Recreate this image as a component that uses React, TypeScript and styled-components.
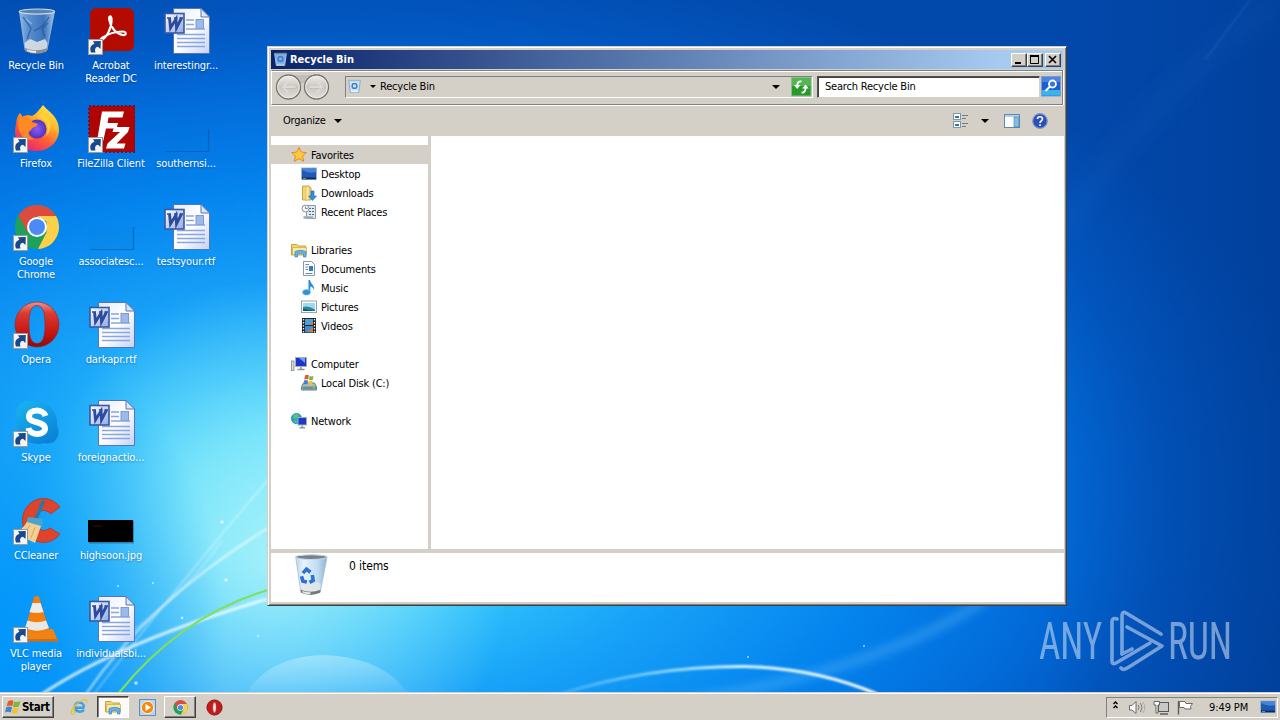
import React from "react";
import styled, { createGlobalStyle, css } from "styled-components";

const FACE = "#d4d0c8";

const Global = createGlobalStyle`
  body { margin: 0; overflow: hidden; }
  * { box-sizing: border-box; }
  #root {
    font-family: "DejaVu Sans Condensed", "DejaVu Sans", sans-serif;
    font-stretch: condensed;
    font-size: 11px;
    line-height: 13px;
    letter-spacing: -0.2px;
    color: #000;
  }
  svg { display: block; flex: none; }
`;

const Screen = styled.div`
  width: 1280px;
  height: 720px;
  display: flex;
  flex-direction: column;
  overflow: hidden;
`;

const Desktop = styled.main`
  position: relative;
  flex: 1;
  overflow: hidden;
  background:
    radial-gradient(ellipse 300px 420px at 0px 640px, rgba(0, 150, 252, 0.9), rgba(0, 145, 248, 0.5) 35%, rgba(0, 130, 240, 0) 75%),
    radial-gradient(ellipse 240px 280px at 270px 560px, rgba(190, 248, 250, 0.75), rgba(150, 240, 255, 0) 100%),
    radial-gradient(ellipse 1000px 560px at 330px 500px, #66e2fb 0%, #48d6fb 14%, #2cbefb 24%, #18a2f8 37%, #0484ee 56%, #026edc 71%, #0258c2 84%, #0249ac 100%);
`;

const Wallpaper = styled.svg`
  position: absolute;
  inset: 0;
`;

const IconGrid = styled.div`
  position: relative;
  display: grid;
  width: max-content;
  margin-left: -1px;
  padding-top: 7px;
  grid-auto-flow: column;
  grid-template-rows: repeat(7, 98px);
  grid-template-columns: repeat(3, 74px);
  column-gap: 1px;
`;

const Shortcut = styled.div<{ $col: number; $row: number }>`
  grid-column: ${(p) => p.$col};
  grid-row: ${(p) => p.$row};
  display: flex;
  flex-direction: column;
  align-items: center;
  gap: 4px;
`;

const ShortcutLabel = styled.span`
  color: #fff;
  text-align: center;
  white-space: pre;
  letter-spacing: -0.12px;
  text-shadow: 0 1px 2px rgba(0, 30, 90, 0.4);
`;

const Window = styled.section`
  position: absolute;
  left: 267px;
  top: 46px;
  width: 800px;
  height: 560px;
  display: flex;
  flex-direction: column;
  padding: 2px;
  background: ${FACE};
  border: 1px solid;
  border-color: ${FACE} #404040 #404040 ${FACE};
  box-shadow: inset 1px 1px #fff, inset -1px -1px #808080;
`;

const TitleBar = styled.header`
  display: flex;
  align-items: center;
  height: 19px;
  margin: 1px 1px 1px;
  padding: 0 2px 0 3px;
  gap: 3px;
  background: linear-gradient(90deg, #0a246a, #a6caf0 92%);
  color: #fff;
  font-weight: bold;
`;

const Title = styled.span`
  flex: 1;
  letter-spacing: 0;
  margin-top: -1px;
`;

const raised = css`
  border: 1px solid;
  border-color: #fff #404040 #404040 #fff;
  box-shadow: inset -1px -1px #808080;
  background: ${FACE};
`;

const CaptionGroup = styled.div`
  display: flex;
`;

const CaptionButton = styled.button<{ $gap?: boolean }>`
  ${raised}
  width: 16px;
  height: 14px;
  padding: 0;
  margin-left: ${(p) => (p.$gap ? 2 : 0)}px;
  display: flex;
  align-items: center;
  justify-content: center;
`;

const NavBar = styled.div`
  display: flex;
  align-items: center;
  height: 35px;
  margin: 0 1px;
  padding: 0 0 2px 3px;
  border: 1px solid;
  border-color: #808080 #808080 #808080 #fff;
  box-shadow: inset 0 1px #fff, 0 1px #fff, 1px 0 #fff;
`;

const AddressBar = styled.div`
  display: flex;
  align-items: center;
  flex: none;
  width: 468px;
  height: 22px;
  margin-left: 14px;
  border: 1px solid;
  border-color: #808080 #fff #fff #808080;
  padding: 0 0 0 2px;
`;

const AddressText = styled.span`
  flex: 1;
  margin-left: 4px;
`;

const SearchBox = styled.div`
  display: flex;
  align-items: center;
  flex: none;
  width: 223px;
  height: 22px;
  margin: 0 1px 0 4px;
  padding-left: 7px;
  background: #fff;
  border: 1px solid;
  border-color: #505050 ${FACE} ${FACE} #505050;
  box-shadow: inset 1px 1px #404040;
`;

const CommandBar = styled.div`
  display: flex;
  align-items: center;
  height: 31px;
  padding: 0 16px 0 13px;
`;

const Spacer = styled.div<{ $w?: number }>`
  flex: ${(p) => (p.$w ? `0 0 ${p.$w}px` : 1)};
`;

const Body = styled.div`
  display: flex;
  height: 413px;
`;

const NavPane = styled.nav`
  width: 158px;
  padding-top: 9px;
  background: #fff;
  display: flex;
  flex-direction: column;
  gap: 19px;
  border-left: 1px solid ${FACE};
`;

const NavItem = styled.div<{ $depth: number; $active?: boolean }>`
  display: flex;
  align-items: center;
  height: 19px;
  gap: 4px;
  padding-left: ${(p) => (p.$depth ? 30 : 20)}px;
  background: ${(p) => (p.$active ? FACE : "transparent")};
`;

const NavLabel = styled.span`
  padding-top: 1px;
`;

const Files = styled.div`
  flex: 1;
  margin-left: 3px;
  background: #fff;
`;

const Details = styled.footer`
  display: flex;
  height: 49px;
  margin: 4px 0 0 1px;
  background: #fff;
  padding-left: 18px;
  gap: 17px;
`;

const DetailsText = styled.span`
  margin-top: 7px;
  font-size: 12px;
  letter-spacing: -0.1px;
`;

const Taskbar = styled.footer`
  display: flex;
  align-items: center;
  height: 28px;
  padding: 3px 2px 1px;
  background: ${FACE};
  box-shadow: inset 0 1px ${FACE}, inset 0 2px #fff;
`;

const StartButton = styled.button`
  ${raised}
  display: flex;
  align-items: center;
  width: 52px;
  height: 22px;
  gap: 0;
  padding: 0 0 0 1px;
  font: bold 11.5px "DejaVu Sans Condensed", "DejaVu Sans", sans-serif;
  letter-spacing: -0.35px;
`;

const TaskButton = styled.div<{ $w: number; $state?: "pressed" | "raised" }>`
  display: flex;
  align-items: center;
  justify-content: center;
  width: ${(p) => p.$w}px;
  height: 22px;
  ${(p) => p.$state === "raised" && raised}
  ${(p) =>
    p.$state === "pressed" &&
    css`
      border: 1px solid;
      border-color: #404040 #fff #fff #404040;
      box-shadow: inset 1px 1px #808080;
      background: #fbfaf8;
    `}
`;

const Tray = styled.div`
  display: flex;
  align-items: center;
  width: 172px;
  height: 21px;
  padding: 0 1px 0 5px;
  border: 1px solid;
  border-color: #808080 #fff #fff #808080;
`;

const Clock = styled.span`
  width: 58px;
  padding-left: 13px;
  letter-spacing: -0.1px;
  white-space: nowrap;
`;

/* ---------- artwork ---------- */

const Arrow = () => (
  <g transform="translate(1 32)">
    <rect x=".5" y=".5" width="14" height="15" fill="#f4f4f2" stroke="#a09a92" />
    <path d="M3 13.5C1.200 9 3 5.500 6.500 5L5 2.200 12.800 2 12.500 10 10 7.800C7.500 8 6.500 10.200 7.500 13.500Z" fill="#17498c" />
  </g>
);

const Bin = ({ size = 48, symbol = false }: { size?: number; symbol?: boolean }) => (
  <svg width={size} height={size} viewBox="0 0 48 48">
    <defs>
      <linearGradient id={symbol ? "binA" : "binB"} x1="0" x2="1">
        <stop offset="0" stopColor={symbol ? "#b9d4ea" : "#8fb6e0"} />
        <stop offset=".25" stopColor={symbol ? "#e8f4fd" : "#5a90d0"} />
        <stop offset=".7" stopColor={symbol ? "#bfdcf2" : "#3c74bc"} />
        <stop offset="1" stopColor={symbol ? "#8fb2cc" : "#a4c4e6"} />
      </linearGradient>
    </defs>
    <path d="M7.500 4.500L13 43Q24 48 35 43L42.500 4.500Z" fill={`url(#${symbol ? "binA" : "binB"})`} stroke="#9dbbd8" strokeWidth=".8" />
    <path d="M12.500 36L18 32 25 35 33 32 35.500 36L34.500 42Q24 47 13.400 42Z" fill="#e4e6e8" opacity=".85" />
    <path d="M13 41Q24 45.500 35.300 41L34.800 44.500Q24 49 13.400 44.500Z" fill={symbol ? "#77777a" : "#8c8f94"} />
    <path d="M15 44Q20 46.500 24 46V43.800Q19 44 15 42.500Z" fill="#e9e9ea" />
    <ellipse cx="24.900" cy="4.600" rx="17.700" ry="2.600" fill={symbol ? "#76838f" : "#5b84b0"} stroke="#ccd9e4" strokeWidth="1.200" />
    {symbol ? (
      <g fill="none" stroke="#2e71cf" strokeWidth="4">
        <path d="M15.500 22.500L19.500 18 24 21.500" />
        <path d="M14 26L15.500 31.500 20 32.500" />
        <path d="M26 24.500L27 30.500 23 33" />
      </g>
    ) : (
      <g fill="none" stroke="#1f5199" strokeWidth="1.500" opacity=".6">
        <path d="M11 10L19 21 15 32M37 10Q32 20 22 24M36 16L30 22 33 30" />
        <path d="M14 12L20 17" stroke="#a8c8ec" />
      </g>
    )}
  </svg>
);

const TinyBin = ({ dark = false }: { dark?: boolean }) => (
  <svg width="13" height="15">
    <path d="M.7 1.500L2.300 13.500H10.700L12.300 1.500Z" fill={dark ? "#7fb0e4" : "#cfe4f8"} stroke={dark ? "#a5bfdc" : "#88acd0"} />
    <path d="M.5 1.500H12.500" stroke={dark ? "#6a86a6" : "#9eb8d0"} strokeWidth="1.400" />
    <rect x="4.200" y="4.700" width="4.600" height="4.600" rx="1.500" fill="none" stroke="#3a78cc" strokeWidth="1.500" />
    <path d="M3 12.500H10" stroke={dark ? "#b8c4d2" : "#f6f6f8"} strokeWidth="1.500" />
  </svg>
);

const Acrobat = () => (
  <svg width="48" height="48">
    <rect x="3" y="1" width="44" height="43" rx="6" fill="#b30b00" />
    <path d="M15 33C20 30 25 20 24.500 12C24.300 8 21.500 9 22.300 13C23.500 20 29 27 36 28C40 28.500 39.500 24.500 35.500 24.500C28 24.500 20 27.500 15 31C12 33.500 13.500 34.500 15 33Z" fill="none" stroke="#fff" strokeWidth="2.200" />
    <Arrow />
  </svg>
);

const Word = () => (
  <svg width="48" height="48" overflow="visible">
    <defs>
      <linearGradient id="page" x1="0" y1="0" x2="1" y2="1">
        <stop offset="0" stopColor="#e4ecfc" />
        <stop offset=".5" stopColor="#fff" />
        <stop offset="1" stopColor="#c4d2f6" />
      </linearGradient>
      <linearGradient id="wbox" x1="0" y1="0" x2="1" y2="1">
        <stop offset="0" stopColor="#fff" />
        <stop offset="1" stopColor="#8fa9e4" />
      </linearGradient>
    </defs>
    <path d="M11.500 1.500H39L47.500 10V46.500H11.500Z" fill="url(#page)" stroke="#5874b4" />
    <path d="M39 1.500V10H47.500Z" fill="#dbe6fb" stroke="#5874b4" />
    <rect x="34" y="12.500" width="7.500" height="9" fill="#9db8ea" stroke="#7d9ad4" />
    <path d="M24 13H32M24 17.500H32M24 22H43M15 27.500H43M15 31.500H43M15 35.500H43M15 39.500H43" stroke="#8ba6dc" strokeWidth="1.300" />
    <rect x="3" y="6.500" width="19" height="19.500" fill="url(#wbox)" stroke="#3a58a4" strokeWidth="1.600" />
    <path d="M5 11H9M12 11H15.500M17.500 11H21" stroke="#2b4b9e" strokeWidth="1.500" />
    <path d="M7.500 11L8.500 21 14 12 14.500 21 19.500 11" fill="none" stroke="#2b4b9e" strokeWidth="2.800" />
  </svg>
);

const Firefox = () => (
  <svg width="48" height="48">
    <defs>
      <linearGradient id="fox" x1=".85" y1="0" x2=".25" y2="1">
        <stop offset="0" stopColor="#fff14a" />
        <stop offset=".35" stopColor="#ffb52b" />
        <stop offset=".65" stopColor="#ff5a35" />
        <stop offset="1" stopColor="#e6207d" />
      </linearGradient>
      <radialGradient id="globe">
        <stop offset="0" stopColor="#8d5bf5" />
        <stop offset="1" stopColor="#4d35c0" />
      </radialGradient>
    </defs>
    <path d="M31 0C35 5 42 9 45 16C51 29 43 45 25 46C9 46 0 34 4 19C4 14 6 10 8 8L11 12C15 9 18 11 20 11C24 9 27 5 31 0Z" fill="url(#fox)" />
    <circle cx="25" cy="24" r="9.500" fill="url(#globe)" />
    <path d="M6 14C12 9 17 11 20 17L26 19C25 22 20 22 19 25C15 27 16 32 22 34C12 37 5 28 6 14Z" fill="#ff8a24" />
    <path d="M24 12C34 13 38 22 34 31C41 25 40 13 31 7Z" fill="#ffd03a" />
    <Arrow />
  </svg>
);

const FileZilla = () => (
  <svg width="48" height="48">
    <rect x="2" y="1" width="46" height="46" fill="#b00505" />
    <rect x="2" y="1" width="46" height="46" fill="none" stroke="#6f1030" strokeWidth="2" strokeDasharray="2 2" />
    <path d="M15 6.500H37L35.500 12.500H21.500L20.500 18H31L29.500 23.500H19L15.500 39H9.500Z" fill="#fff" />
    <path d="M27 22H42.500L41 27 29.500 38.500H38.500L37 43.500H19L20.500 38.500 33 27H25.500Z" fill="#fff" />
    <Arrow />
  </svg>
);

const ChromeDisc = () => (
  <g>
    <circle cx="24" cy="24" r="22" fill="#1ea15a" />
    <path d="M24 13H43.050A22 22 0 0 0 5.500 12L14.500 29.500Z" fill="#dd4b3e" />
    <path d="M33.500 18.500V29.500L25 46A22 22 0 0 0 43.050 13H24Z" fill="#fdd04a" />
    <circle cx="24" cy="24" r="10" fill="#fff" />
    <circle cx="24" cy="24" r="8" fill="#4c8bf5" />
  </g>
);

const Chrome = () => (
  <svg width="48" height="48">
    <g transform="translate(1 0)"><ChromeDisc /></g>
    <Arrow />
  </svg>
);

const OperaRing = () => (
  <>
    <defs>
      <linearGradient id="op" x1="0" y1="0" x2="0" y2="1">
        <stop offset="0" stopColor="#f0938a" />
        <stop offset=".25" stopColor="#dc3a30" />
        <stop offset=".7" stopColor="#c41410" />
        <stop offset="1" stopColor="#8c0c0c" />
      </linearGradient>
    </defs>
    <path fillRule="evenodd" d="M25 1A22 22.500 0 1 0 25 46A22 22.500 0 1 0 25 1ZM25 4.500C31.500 4.500 33 13 33 23.500S31.500 42.500 25 42.500S17 34 17 23.500S18.500 4.500 25 4.500Z" fill="url(#op)" stroke="#9a2020" strokeWidth=".6" />
  </>
);

const Opera = () => (
  <svg width="48" height="48">
    <OperaRing />
    <Arrow />
  </svg>
);

const Skype = () => (
  <svg width="48" height="48">
    <defs>
      <linearGradient id="sky" x1="0" y1="0" x2=".6" y2="1">
        <stop offset="0" stopColor="#19b5f1" />
        <stop offset="1" stopColor="#0b84d8" />
      </linearGradient>
    </defs>
    <path d="M15 2C21 1 24 3 27 3A21 21 0 0 1 45 26C50 38 42 47 32 44A21 21 0 0 1 5 20C2 11 7 3 15 2Z" fill="url(#sky)" />
    <path d="M33.500 17C31 9.500 17 10 17 17.500C17 25 33 21.500 33 29.500C33 36.500 18 37 16.500 29" fill="none" stroke="#fff" strokeWidth="6" />
    <Arrow />
  </svg>
);

const CCleaner = () => (
  <svg width="48" height="48">
    <path d="M48 10A21 22 0 1 0 48 37L38 31A9.500 10 0 1 1 39 17Z" fill="#df432b" stroke="#a83822" strokeWidth=".8" />
    <path d="M31 5L24 22" stroke="#2b78ac" strokeWidth="3.600" strokeLinecap="round" />
    <path d="M16 20L31 22 30 30 14 27Z" fill="#4ba3cf" />
    <path d="M15 25L29 29Q26 38 23 46L3 36Q10 33 15 25Z" fill="#f3cf94" />
    <path d="M18 28L12 37M23 30L19 41" stroke="#d6a65e" />
    <Arrow />
  </svg>
);

const Vlc = () => (
  <svg width="48" height="48">
    <path d="M10 34H41L46 46H7Z" fill="#ee8414" />
    <path d="M7 44H46V46.500H7Z" fill="#d96c0a" />
    <path d="M22 2Q24.500 0 27 2L37 35Q25 41 13 35Z" fill="#f47d0c" />
    <path d="M20.500 8L28.500 8 31.500 17Q24.500 19 17.500 17Z" fill="#ececec" />
    <path d="M15.500 25.500Q25 29 34 25.500L37 33Q25 38.500 13 33Z" fill="#e8e8e8" />
    <Arrow />
  </svg>
);

const FaintThumb = () => (
  <svg width="48" height="48">
    <path d="M46.500 24V46.500H3" fill="none" stroke="#0a4f9c" strokeOpacity=".55" strokeWidth="1.200" />
    <rect x="2" y="24" width="44" height="22" fill="#0b78d8" fillOpacity=".12" />
  </svg>
);

const BlackThumb = () => (
  <svg width="48" height="48">
    <rect x="2" y="24" width="45" height="22.500" fill="#03314c" opacity=".4" />
    <rect x="1" y="23" width="45" height="22" fill="#000" />
    <path d="M6 29H15" stroke="#3a0e10" />
  </svg>
);

const Flag = ({ size = 18 }: { size?: number }) => (
  <svg width={size} height={size} viewBox="0 0 18 18">
    <path d="M4 3.500Q7 1.500 9.500 3L8.300 8.200Q5.500 6.800 2.600 8.300Z" fill="#e8582a" />
    <path d="M10.300 3.500Q13.500 4.800 16.500 3L15 8.300Q12 10 9 8.600Z" fill="#7ab83c" />
    <path d="M2.300 9.300Q5.500 7.800 8 9.200L6.800 14.500Q4 13 1 14.500Z" fill="#3c86d0" />
    <path d="M8.800 9.600Q12 11 14.800 9.400L13.300 14.700Q10.500 16.300 7.500 14.800Z" fill="#f5c130" />
  </svg>
);

const Tri = ({ w = 7 }: { w?: number }) => (
  <svg width={w} height={w / 2} viewBox="0 0 8 4" preserveAspectRatio="none">
    <path d="M0 0H8L4 4Z" fill="#000" />
  </svg>
);

const RoundNav = () => (
  <svg width="56" height="28">
    <defs>
      <linearGradient id="rn" x1="0" y1="0" x2="0" y2="1">
        <stop offset="0" stopColor="#f0eeea" />
        <stop offset=".5" stopColor="#c9c6c0" />
        <stop offset="1" stopColor="#e2dfda" />
      </linearGradient>
    </defs>
    <path d="M12 2H42V8Q28 12 12 8Z" fill="#c2bfb8" />
    {[13.500, 41.500].map((cx) => (
      <g key={cx}>
        <circle cx={cx} cy="14" r="12" fill="url(#rn)" stroke="#77746f" strokeWidth="1.300" />
        <circle cx={cx} cy="14" r="10.800" fill="none" stroke="#f3f1ee" strokeWidth=".8" />
      </g>
    ))}
    <path d="M20.500 14H8.500M13 9L8 14 13 19M34.500 14H46.500M42 9L47 14 42 19" fill="none" stroke="#dddad5" strokeWidth="2" />
    <path d="M20.500 15.500H10M34.500 15.500H46" stroke="#b8b5b0" strokeWidth=".5" />
  </svg>
);

const Refresh = () => (
  <svg width="21" height="20">
    <rect x=".5" y=".5" width="19.500" height="18.500" fill="#28992c" stroke="#8fbc8c" />
    <rect x="1" y="1" width="18.500" height="8" fill="#72c86e" opacity=".6" />
    <path d="M10.500 4.500C7.500 4 6.200 6 6.200 9" fill="none" stroke="#fff" strokeWidth="1.800" />
    <path d="M3 8H9.500L6.200 12Z" fill="#fff" />
    <path d="M10.500 15.500C13.500 16 14.500 13.500 14.500 11" fill="none" stroke="#fff" strokeWidth="1.800" />
    <path d="M11.200 11.500H17.800L14.500 7.500Z" fill="#fff" />
  </svg>
);

const SearchGo = () => (
  <svg width="20" height="21">
    <rect x=".5" y=".5" width="19" height="19.500" fill="#1c5fd2" stroke="#7a9cd0" />
    <rect x="1" y="14" width="18" height="5.500" fill="#37b4ee" />
    <rect x="1" y="1" width="18" height="5" fill="#6b9ee8" opacity=".6" />
    <circle cx="11.500" cy="8" r="3.500" fill="#3b74dc" stroke="#fff" strokeWidth="1.800" />
    <path d="M9 10.500L4.500 15" stroke="#fff" strokeWidth="2.200" />
  </svg>
);

const ViewIcon = () => (
  <svg width="16" height="16">
    <rect x=".5" y=".5" width="7" height="6" fill="#fff" stroke="#8095a8" />
    <rect x=".5" y="8.500" width="7" height="6" fill="#fff" stroke="#8095a8" />
    <path d="M2 4H6M2 12H6" stroke="#2878a8" strokeWidth="2.200" />
    <path d="M9 2.500H15M9 5.500H13M9 10.500H15M9 13.500H13" stroke="#6a7c90" />
  </svg>
);

const PaneIcon = () => (
  <svg width="16" height="14">
    <rect x=".5" y=".5" width="15" height="13" fill="#fff" stroke="#5c8ab4" />
    <rect x="1" y="1" width="14" height="2" fill="#b4d0e8" />
    <rect x="10" y="3" width="5" height="10" fill="#7fc0e0" stroke="#4b7ba8" strokeWidth=".6" />
  </svg>
);

const HelpIcon = () => (
  <svg width="16" height="16">
    <circle cx="8" cy="8" r="7.300" fill="#2a50b8" stroke="#8096c8" strokeWidth="1.200" />
    <path d="M5.500 6C5.500 3 10.500 3 10.500 6C10.500 8 8 7.800 8 10M8 11.300V13" fill="none" stroke="#fff" strokeWidth="1.600" />
  </svg>
);

const Monitor = () => (
  <svg width="16" height="16">
    <rect x=".5" y="2" width="15" height="11" fill="#2458b0" stroke="#9db4cc" />
    <path d="M1 11V4Q8 8 15 6V3H1Z" fill="#3f86dc" />
    <path d="M1 12.500H15" stroke="#0c2c66" strokeWidth="2" />
    <path d="M2 12.500H5" stroke="#4ca868" />
  </svg>
);

const glyphs: Record<string, React.ReactNode> = {
  star: <path d="M8 .5L10.200 5 15.400 5.600 11.500 9.100 12.700 14.300 8 11.700 3.300 14.300 4.500 9.100 .6 5.600 5.800 5Z" fill="#ffc83d" stroke="#e98a1e" />,
  downloads: (
    <>
      <path d="M1.500 1H8L10 3V15H1.500Z" fill="#f4d774" stroke="#c9a544" />
      <path d="M5 2.500L8 1V14L5 15.500Z" fill="#fff0b0" stroke="#d0ac50" strokeWidth=".6" />
      <path d="M10 6H13V11H15.500L11.500 15.500 7.500 11H10Z" fill="#2f8fe0" stroke="#1d68b0" strokeWidth=".6" />
    </>
  ),
  recent: (
    <>
      <path d="M5.500 1.500H14.500V14.500H5.500Z" fill="#e2e8ec" stroke="#8d9ba4" />
      <path d="M8 4.500H10M11 4.500H13M8 7.500H10M11 7.500H13M8 10.500H10M11 10.500H13" stroke="#51687c" />
      <circle cx="4.500" cy="4.500" r="3.500" fill="#f2f6f8" stroke="#8795a0" />
      <path d="M4.500 2.500V4.500H6.500" fill="none" stroke="#54646f" strokeWidth=".8" />
      <path d="M2.500 13.500H12" stroke="#9fabb4" strokeWidth="2.500" />
    </>
  ),
  libraries: (
    <>
      <path d="M.5 2.500H6L7.500 4H14.500V13H.5Z" fill="#f3d670" stroke="#c9a23c" />
      <path d="M1.500 5.500H15.500V12.500H1.500Z" fill="#fbe9a0" stroke="#d1b04e" strokeWidth=".8" />
      <path d="M4 15V9.500Q9.500 7 15 9.500V15H12.500V12Q9.500 10.500 6.500 12V15Z" fill="#64b3ea" stroke="#3b86c4" strokeWidth=".7" />
    </>
  ),
  documents: (
    <>
      <path d="M2.500 .5H10.500L13.500 3.500V14.500H2.500Z" fill="#fff" stroke="#8698b4" />
      <path d="M4.500 3.500H8M4.500 6H7M4.500 8.500H7M4.500 12.500H11.500" stroke="#6384b8" />
      <rect x="8" y="5" width="4" height="5" fill="#3977c0" />
    </>
  ),
  music: (
    <>
      <path d="M7.500 0H9C9.500 4 14 5 13 10.500C12.500 7.500 10.500 6.500 9.300 6.500V12.500H7.500Z" fill="#2c8bd8" />
      <ellipse cx="5.500" cy="12.300" rx="3.900" ry="2.800" fill="#2f90dc" stroke="#7dbcf0" strokeWidth=".6" />
    </>
  ),
  pictures: (
    <>
      <rect x=".5" y="2" width="15" height="11.500" fill="#fff" stroke="#94a4b0" />
      <rect x="2" y="4" width="12" height="8" fill="#9fd8f4" />
      <path d="M2 8Q7 6 14 10.500V12H2Z" fill="#2a8a8c" />
      <path d="M2 10L14 12H2Z" fill="#1a4e70" />
    </>
  ),
  videos: (
    <>
      <rect x="1" y="0" width="14" height="15" fill="#20242a" />
      <rect x="4" y="1" width="8" height="6" fill="#4da0dc" />
      <rect x="4" y="8" width="8" height="6.500" fill="#3e8bd0" />
      <path d="M8 6.500L12 3.500V7ZM6 13.500L12 9.500V14.500Z" fill="#d07a4c" />
      <path d="M2.500 1V15M13.500 1V15" stroke="#e8ecf0" strokeWidth="1.300" strokeDasharray="1.500 1.500" />
    </>
  ),
  computer: (
    <>
      <rect x=".5" y="5" width="2.500" height="9.500" fill="#d7ddd8" stroke="#7d8a84" strokeWidth=".8" />
      <rect x="4.500" y="1.500" width="11" height="9" fill="#1b35c8" stroke="#a3acb8" />
      <path d="M8 2H14V7Z" fill="#7c9cf4" />
      <path d="M10 11V13M6.500 13.500H13.500" stroke="#8c959f" strokeWidth="1.600" />
    </>
  ),
  disk: (
    <>
      <path d="M2.500 8H13.500L15.500 11.500V15H.5V11.500Z" fill="#aebcc0" stroke="#6e8086" />
      <path d="M1.500 11.500H15V14.500H1.500Z" fill="#6b8f98" />
      <path d="M12 13H14" stroke="#59e04a" strokeWidth="1.400" />
      <path d="M4 .5Q6 -1 7.800 .2L7.200 4.500Q5 3.500 3.200 4.700Z" fill="#e65a28" />
      <path d="M8.500 1Q10.500 2 12.500 .8L11.800 4.700Q10 5.800 8 4.800Z" fill="#78b83c" />
      <path d="M3 5.500Q5 4.500 7 5.500L6.400 9.500Q4.500 8.500 2.500 9.700Z" fill="#3c84d0" />
      <path d="M7.800 5.700Q10 6.500 11.600 5.500L11 9.700Q9 10.700 7.200 9.700Z" fill="#f3c030" />
    </>
  ),
  network: (
    <>
      <circle cx="5.500" cy="5.500" r="5.200" fill="#2a9ed4" stroke="#1a6ea0" strokeWidth=".5" />
      <path d="M2 2.500Q5 0 8 2L6 5 3 6ZM2 9L5 7 6 10Z" fill="#58c868" />
      <rect x="7" y="4.500" width="8.500" height="7.500" fill="#1c3cc8" stroke="#a6b0bc" />
      <path d="M11.200 12.500V14.500M8.500 14.800H14" stroke="#8c959f" strokeWidth="1.400" />
    </>
  ),
};

const Glyph = ({ name }: { name: string }) =>
  name === "desktop" ? <Monitor /> : (
    <svg width="16" height="16">{glyphs[name]}</svg>
  );

const IeIcon = () => (
  <svg width="18" height="18">
    <path d="M14.500 9.700H5.500C5.500 14 11.500 15 14 11.800M4.700 9C4.700 3 13.500 3 14 9" fill="none" stroke="#3f9fe4" strokeWidth="2.600" />
    <path d="M5 7Q2.500 12 5 15Q2 18 1.200 15C1 11 7 4 13 2C16 1 17.500 2 16.500 5" fill="none" stroke="#e8c23c" strokeWidth="1.300" />
  </svg>
);

const PlayerIcon = () => (
  <svg width="17" height="17">
    <rect x=".5" y=".5" width="16" height="16" fill="#b8d4f0" stroke="#5b8ec4" />
    <circle cx="8.500" cy="8.500" r="6.200" fill="#f58a12" stroke="#fff3dc" />
    <path d="M6.500 5L12 8.500 6.500 12Z" fill="#fff" />
  </svg>
);

const TaskChrome = () => (
  <svg width="15" height="15" viewBox="1 1 46 46"><ChromeDisc /></svg>
);

const TaskOpera = () => (
  <svg width="17" height="17">
    <circle cx="8.500" cy="8.500" r="7.600" fill="#c81818" stroke="#7c0c0c" strokeWidth=".8" />
    <ellipse cx="8.500" cy="8.500" rx="2" ry="5.300" fill="#f2dcda" stroke="#8c1010" strokeWidth=".7" />
  </svg>
);

const TrayIcons = () => (
  <svg width="84" height="17">
    <path d="M1.500 5L3.500 3 5.500 5M1.500 9L3.500 7 5.500 9" fill="none" stroke="#000" strokeWidth="1.400" />
    <path d="M17.500 6.500H20L24 2.500V14.500L20 11H17.500Z" fill="#fff" stroke="#6a6a68" />
    <path d="M26 6Q28 8.500 26 11M28.500 4Q31.500 8.500 28.500 13" fill="none" stroke="#6f6f6d" strokeWidth=".9" />
    <path d="M31 3Q34.500 8.500 31 14" fill="none" stroke="#a5a5a2" strokeWidth=".9" />
    <rect x="46.500" y="3.500" width="10" height="9" fill="#c8c8c6" stroke="#575757" />
    <path d="M48 15H56" stroke="#575757" strokeWidth="1.400" />
    <path d="M42 2.500H47.500V6H46V14H44V6H42Z" fill="#fff" stroke="#575757" strokeWidth=".9" />
    <path d="M66.500 2V15.500" stroke="#5c5c5a" strokeWidth="1.400" />
    <path d="M67.500 2.500H73L74 4.500H80.500L78.500 7.500 79 10H73L72 8.500H67.500Z" fill="#fff" stroke="#6a6a68" />
  </svg>
);

const Waves = () => (
  <Wallpaper width="1280" height="692">
    <defs>
      <filter id="soft" x="-10%" y="-50%" width="120%" height="200%"><feGaussianBlur stdDeviation="1.200" /></filter>
      <filter id="beam" x="-30%" y="-50%" width="160%" height="200%"><feGaussianBlur stdDeviation="5" /></filter>
      <filter id="haze" x="-30%" y="-50%" width="160%" height="200%"><feGaussianBlur stdDeviation="12" /></filter>
      <linearGradient id="arc" x1="560" x2="880" y1="0" y2="0" gradientUnits="userSpaceOnUse">
        <stop offset="0" stopColor="#8fdcff" stopOpacity=".3" />
        <stop offset=".55" stopColor="#d8f6ff" />
        <stop offset="1" stopColor="#fff" />
      </linearGradient>
      <linearGradient id="shade" x1="1040" x2="1280" y1="0" y2="0" gradientUnits="userSpaceOnUse">
        <stop offset="0" stopColor="#003c98" stopOpacity="0" />
        <stop offset="1" stopColor="#003a90" stopOpacity=".55" />
      </linearGradient>
      <linearGradient id="lobe" x1="0" x2="0" y1="0" y2="1">
        <stop offset="0" stopColor="#fff" stopOpacity=".32" />
        <stop offset="1" stopColor="#fff" stopOpacity=".06" />
      </linearGradient>
    </defs>
    <rect width="1280" height="692" fill="url(#shade)" />
    <path d="M1064 230Q1150 90 1280 0" fill="none" stroke="#3c86dc" strokeWidth="6" opacity=".3" filter="url(#haze)" />
    <path d="M1205 60L1250 0" stroke="#4a90e0" opacity=".45" filter="url(#soft)" />
    <g fill="none" filter="url(#soft)" stroke="#fff">
      <path d="M42 694Q120 642 267 599" strokeWidth="3" opacity=".75" />
      <path d="M86 694Q150 600 268 528" strokeWidth="2" opacity=".65" />
      <path d="M94 694Q190 570 268 480" strokeWidth="1.200" opacity=".5" />
      <path d="M120 640Q190 590 222 540" strokeWidth="2" opacity=".25" />
    </g>
    <path d="M118 694Q180 616 268 590" fill="none" stroke="#7fe05c" strokeWidth="2.200" />
    <path d="M690 700Q880 670 985 600" fill="none" stroke="#7fd0ff" strokeWidth="9" opacity=".3" filter="url(#beam)" />
    <path d="M560 694Q650 666 745 666.500Q815 668 877 694" fill="none" stroke="url(#arc)" strokeWidth="3.200" filter="url(#soft)" />
    <path d="M246 694Q268 656 325 655Q385 658 408 694Z" fill="url(#lobe)" />
    <g fill="#fff" opacity=".65">
      <circle cx="226" cy="580" r="1.700" /><circle cx="136" cy="683" r="1.800" /><circle cx="222" cy="522" r="1.800" />
      <circle cx="118" cy="586" r="1" /><circle cx="153" cy="583" r="1" /><circle cx="258" cy="636" r="1" />
      <circle cx="748" cy="657" r="1" /><circle cx="864" cy="646" r="1" /><circle cx="182" cy="618" r="1.300" />
    </g>
  </Wallpaper>
);

const Watermark = styled.svg`
  position: absolute;
  left: 1036px;
  top: 607px;
`;

const Brand = () => (
  <Watermark width="210" height="70" opacity=".55">
    <g fill="#d4e4f6" fontFamily="Roboto, sans-serif" fontWeight="400" fontSize="52">
      <text x="3" y="52" textLength="63" lengthAdjust="spacingAndGlyphs">ANY</text>
      <text x="132" y="52" textLength="64" lengthAdjust="spacingAndGlyphs">RUN</text>
    </g>
    <g fill="none" stroke="#d4e4f6" strokeWidth="3.600" strokeLinejoin="round" strokeLinecap="round">
      <path d="M81 12Q76 10 76 15V54Q76 58 80 56L114 36" />
      <path d="M86 47V9Q86 4 90 6L125 27M91 20L126 39 93 60Q87 64 85 61" />
      <path d="M86 47L96 42" />
    </g>
  </Watermark>
);

const shortcuts: [number, number, string, React.ReactNode][] = [
  [1, 1, "Recycle Bin", <Bin />],
  [1, 2, "Firefox", <Firefox />],
  [1, 3, "Google\nChrome", <Chrome />],
  [1, 4, "Opera", <Opera />],
  [1, 5, "Skype", <Skype />],
  [1, 6, "CCleaner", <CCleaner />],
  [1, 7, "VLC media\nplayer", <Vlc />],
  [2, 1, "Acrobat\nReader DC", <Acrobat />],
  [2, 2, "FileZilla Client", <FileZilla />],
  [2, 3, "associatesc...", <FaintThumb />],
  [2, 4, "darkapr.rtf", <Word />],
  [2, 5, "foreignactio...", <Word />],
  [2, 6, "highsoon.jpg", <BlackThumb />],
  [2, 7, "individualsbi...", <Word />],
  [3, 1, "interestingr...", <Word />],
  [3, 2, "southernsi...", <FaintThumb />],
  [3, 3, "testsyour.rtf", <Word />],
];

const navGroups: [string, string][][] = [
  [["star", "Favorites"], ["desktop", "Desktop"], ["downloads", "Downloads"], ["recent", "Recent Places"]],
  [["libraries", "Libraries"], ["documents", "Documents"], ["music", "Music"], ["pictures", "Pictures"], ["videos", "Videos"]],
  [["computer", "Computer"], ["disk", "Local Disk (C:)"]],
  [["network", "Network"]],
];

export default function App() {
  return (
    <Screen>
      <Global />
      <Desktop>
        <Waves />
        <IconGrid>
          {shortcuts.map(([c, r, label, art]) => (
            <Shortcut key={label} $col={c} $row={r}>
              {art}
              <ShortcutLabel>{label}</ShortcutLabel>
            </Shortcut>
          ))}
        </IconGrid>
        <Brand />
        <Window>
          <TitleBar>
            <TinyBin dark />
            <Title>Recycle Bin</Title>
            <CaptionGroup>
              <CaptionButton aria-label="Minimize"><svg width="10" height="9"><path d="M1 8H7" stroke="#000" strokeWidth="2" /></svg></CaptionButton>
              <CaptionButton aria-label="Maximize"><svg width="10" height="9"><path d="M.5 1H8.500V8.500H.5Z" fill="none" stroke="#000" /><path d="M0 1H9" stroke="#000" strokeWidth="2" /></svg></CaptionButton>
              <CaptionButton aria-label="Close" $gap><svg width="10" height="9"><path d="M1 1L8 8M8 1L1 8" stroke="#000" strokeWidth="1.600" /></svg></CaptionButton>
            </CaptionGroup>
          </TitleBar>
          <NavBar>
            <RoundNav />
            <AddressBar>
              <TinyBin />
              <Spacer $w={9} />
              <Tri w={6} />
              <AddressText>Recycle Bin</AddressText>
              <Tri w={8} />
              <Spacer $w={11} />
              <Refresh />
            </AddressBar>
            <SearchBox>Search Recycle Bin</SearchBox>
            <SearchGo />
          </NavBar>
          <CommandBar>
            <span>Organize</span>
            <Spacer $w={8} />
            <Tri w={8} />
            <Spacer />
            <ViewIcon />
            <Spacer $w={12} />
            <Tri w={8} />
            <Spacer $w={15} />
            <PaneIcon />
            <Spacer $w={12} />
            <HelpIcon />
          </CommandBar>
          <Body>
            <NavPane>
              {navGroups.map((group) => (
                <div key={group[0][1]}>
                  {group.map(([icon, label], i) => (
                    <NavItem key={label} $depth={i ? 1 : 0} $active={icon === "star"}>
                      <Glyph name={icon} />
                      <NavLabel>{label}</NavLabel>
                    </NavItem>
                  ))}
                </div>
              ))}
            </NavPane>
            <Files />
          </Body>
          <Details>
            <Bin size={43} symbol />
            <DetailsText>0 items</DetailsText>
          </Details>
        </Window>
      </Desktop>
      <Taskbar>
        <StartButton><Flag />Start</StartButton>
        <Spacer $w={13} />
        <TaskButton $w={24}><IeIcon /></TaskButton>
        <Spacer $w={6} />
        <TaskButton $w={32} $state="pressed"><Glyph name="libraries" /></TaskButton>
        <Spacer $w={5} />
        <TaskButton $w={26}><PlayerIcon /></TaskButton>
        <Spacer $w={4} />
        <TaskButton $w={32} $state="raised"><TaskChrome /></TaskButton>
        <Spacer $w={6} />
        <TaskButton $w={24}><TaskOpera /></TaskButton>
        <Spacer />
        <Tray>
          <TrayIcons />
          <Clock>9:49 PM</Clock>
          <Spacer />
          <Monitor />
        </Tray>
      </Taskbar>
    </Screen>
  );
}
